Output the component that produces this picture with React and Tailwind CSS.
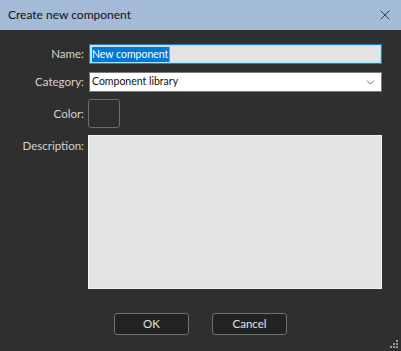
import { ChevronDown, X } from 'lucide-react'

const font = { fontFamily: 'Lato, "Noto Sans", sans-serif' }

export default function App() {
  return (
    <div className="w-[401px] h-[351px] flex flex-col bg-[#2f2f2f] text-[11.5px] overflow-hidden" style={font}>
      {/* Title bar */}
      <div className="h-[30px] shrink-0 flex items-center justify-between bg-[#a3bbd6] pl-[8px] pr-[8px]">
        <span className="text-[12px] text-[#111]">Create new component</span>
        <X size={16} strokeWidth={1.2} className="text-[#222]" />
      </div>

      {/* Form */}
      <div className="relative flex-1 flex flex-col pt-[14px] pr-[19px]">
        <div className="grid grid-cols-[84px_1fr] gap-x-[4px]">
          <label className="h-[20px] flex items-center justify-end text-[#d4d4d4]">Name:</label>
          <div className="h-[20px] ml-[1px] flex items-center bg-[#e3e3e3] border border-[#1f7fd6] shadow-[inset_0_0_0_1px_#9fe6ff] px-[2px] text-[10.5px]">
            <span className="bg-[#0078d7] text-white leading-[15px] pr-[1px]">New component</span>
            <span className="w-[1px] h-[15px] bg-[#f08040]" />
          </div>

          <label className="h-[20px] mt-[8px] flex items-center justify-end text-[#d4d4d4]">Category:</label>
          <div className="h-[20px] mt-[8px] ml-[1px] flex items-center justify-between bg-white border border-[#7a7a7a] pl-[2px] pr-[4px] text-[#111] text-[10.5px]">
            <span>Component library</span>
            <ChevronDown size={13} strokeWidth={1.3} className="text-[#333]" />
          </div>

          <label className="h-[29px] mt-[7px] flex items-center justify-end text-[#d4d4d4]">Color:</label>
          <div className="h-[29px] mt-[7px]">
            <div className="w-[32px] h-[29px] rounded-[3px] border border-[#6e6e6e]" />
          </div>

          <label className="mt-[7px] pt-[2px] flex justify-end text-[#d4d4d4]">Description:</label>
          <div className="h-[154px] mt-[7px] bg-[#e4e4e4] border border-[#f2f2f2]" />
        </div>

        {/* Buttons */}
        <div className="flex gap-[23px] pl-[114px] mt-[24px]">
          <button className="w-[75px] h-[22px] rounded-[3px] bg-[#232323] border border-[#707070] text-[#e4e4e4]">OK</button>
          <button className="w-[75px] h-[22px] rounded-[3px] bg-[#232323] border border-[#707070] text-[#e4e4e4]">Cancel</button>
        </div>

        {/* Resize grip */}
        <svg className="absolute right-[2px] bottom-[2px]" width="10" height="10" viewBox="0 0 10 10">
          <rect x="7" y="1" width="2" height="2" fill="#9a9a9a" />
          <rect x="4" y="4" width="2" height="2" fill="#9a9a9a" />
          <rect x="7" y="4" width="2" height="2" fill="#9a9a9a" />
          <rect x="1" y="7" width="2" height="2" fill="#9a9a9a" />
          <rect x="4" y="7" width="2" height="2" fill="#9a9a9a" />
          <rect x="7" y="7" width="2" height="2" fill="#9a9a9a" />
        </svg>
      </div>
    </div>
  )
}
